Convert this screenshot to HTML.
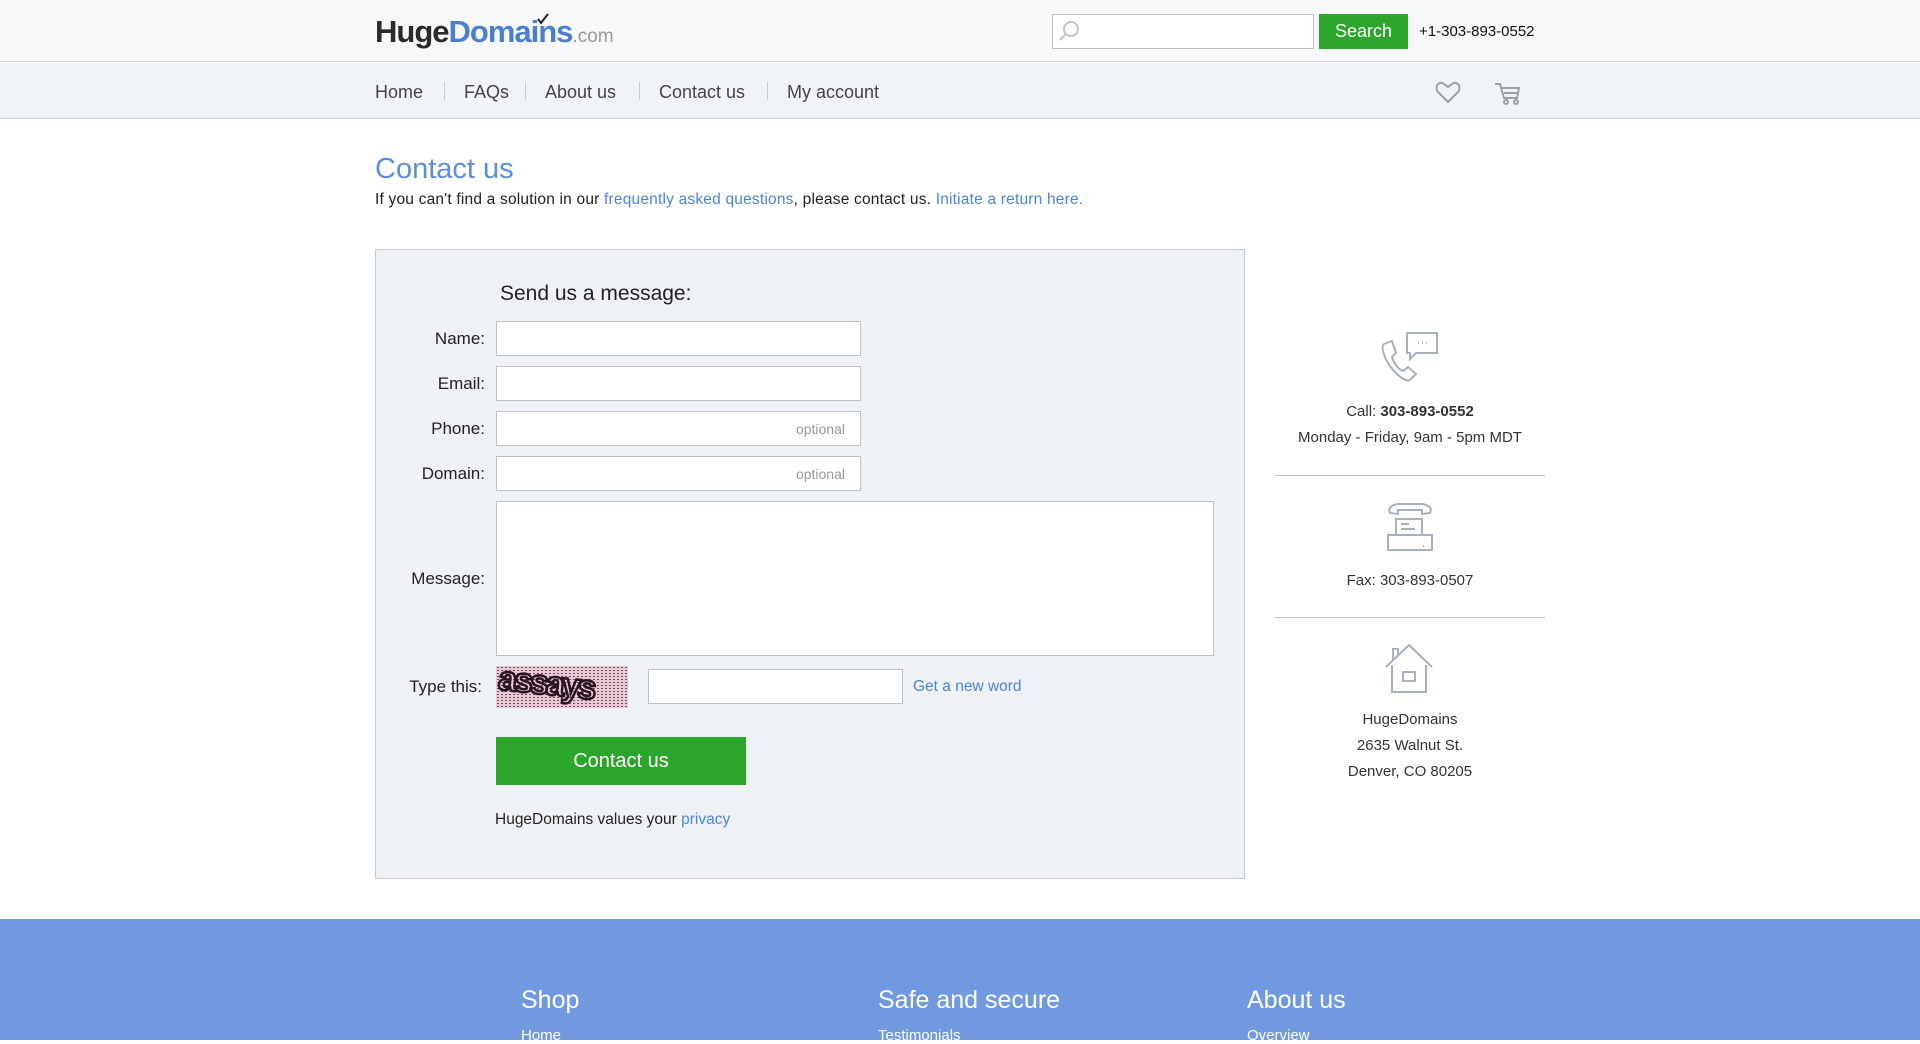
<!DOCTYPE html>
<html><head><meta charset="utf-8"><style>
*{margin:0;padding:0;box-sizing:border-box}
body{width:1920px;height:1040px;overflow:hidden;font-family:"Liberation Sans","DejaVu Sans",sans-serif;background:#fff;color:#222;position:relative}
.a{position:absolute}
.top{left:0;top:0;width:1920px;height:62px;background:#f6f8fa;border-bottom:1px solid #d4d8dd}
.nav{left:0;top:63px;width:1920px;height:56px;background:#f0f4f7;border-bottom:1px solid #cfd4d9}
.navi{top:80px;font-size:18px;color:#444;height:22px;line-height:22px}
.sep{top:82px;width:1px;height:18px;background:#c8ccd0}
.lbl{font-size:17px;color:#222;text-align:right;width:130px;left:355px}
.inp{left:496px;width:365px;height:35px;background:#fff;border:1px solid #bfc3c7}
.opt{font-size:14px;color:#999;position:absolute;right:15px;top:9px}
.link{color:#4a86d8}
.rc{width:270px;left:1275px;text-align:center;font-size:15px;color:#333}
.hr{left:1275px;width:270px;height:1px;background:#b9c3cc}
.fh{top:986px;font-size:25px;color:#fff}
.fl{top:1027px;font-size:15px;color:#fff}
</style></head><body>
<div class="a top"></div>
<div class="a" style="left:375px;top:14px;font-size:31px;font-weight:bold;letter-spacing:-1px;line-height:36px"><span style="color:#2a2a2a">Huge</span><span style="color:#4a7fcf">Domains</span><span style="color:#999;font-size:19px;font-weight:normal;letter-spacing:0">.com</span></div>
<svg class="a" style="left:536px;top:13px" width="14" height="12"><path d="M2 6l3 4 7-9" stroke="#222" stroke-width="2" fill="none"/></svg>
<div class="a" style="left:1052px;top:14px;width:262px;height:35px;background:#fff;border:1px solid #c0c0c0"></div>
<svg class="a" style="left:1057px;top:19px" width="24" height="24"><circle cx="14" cy="10" r="7" stroke="#c6c6c6" stroke-width="2" fill="none"/><path d="M9 15l-6 6" stroke="#c6c6c6" stroke-width="2"/></svg>
<div class="a" style="left:1319px;top:14px;width:89px;height:35px;background:#2ba52b;color:#fff;font-size:18px;text-align:center;line-height:35px">Search</div>
<div class="a" style="left:1419px;top:23px;font-size:15px;color:#111">+1-303-893-0552</div>
<div class="a nav"></div>
<div class="a navi" style="left:375px;top:81px">Home</div><div class="a sep" style="left:444px"></div>
<div class="a navi" style="left:464px;top:81px">FAQs</div><div class="a sep" style="left:525px"></div>
<div class="a navi" style="left:545px;top:81px">About us</div><div class="a sep" style="left:639px"></div>
<div class="a navi" style="left:659px;top:81px">Contact us</div><div class="a sep" style="left:767px"></div>
<div class="a navi" style="left:787px;top:81px">My account</div>
<svg class="a" style="left:1435px;top:81px" width="26" height="24"><path d="M13 21L3 11C-1 6 4-1 9 3l4 3 4-3c5-4 10 3 6 8z" stroke="#9aa0a6" stroke-width="2" fill="none"/></svg>
<svg class="a" style="left:1494px;top:81px" width="28" height="26"><path d="M1 3h5l4 14h13l2-10H8" stroke="#9aa0a6" stroke-width="2" fill="none"/><path d="M10 12h14" stroke="#9aa0a6" stroke-width="2"/><circle cx="12" cy="21" r="2" stroke="#9aa0a6" stroke-width="2" fill="none"/><circle cx="22" cy="21" r="2" stroke="#9aa0a6" stroke-width="2" fill="none"/></svg>

<div class="a" style="left:375px;top:153px;font-size:29px;color:#5b8fd9">Contact us</div>
<div class="a" style="left:375px;top:191px;font-size:15.5px;color:#222;letter-spacing:0.2px">If you can't find a solution in our <span class="link">frequently asked questions</span>, please contact us. <span class="link">Initiate a return here.</span></div>

<div class="a" style="left:375px;top:249px;width:870px;height:630px;background:#eff2f5;border:1px solid #c8ccd0"></div>
<div class="a" style="left:500px;top:282px;font-size:21px;color:#222">Send us a message:</div>
<div class="a lbl" style="top:329px">Name:</div><div class="a inp" style="top:321px"></div>
<div class="a lbl" style="top:374px">Email:</div><div class="a inp" style="top:366px"></div>
<div class="a lbl" style="top:419px">Phone:</div><div class="a inp" style="top:411px"><span class="opt">optional</span></div>
<div class="a lbl" style="top:464px">Domain:</div><div class="a inp" style="top:456px"><span class="opt">optional</span></div>
<div class="a lbl" style="top:569px">Message:</div>
<div class="a" style="left:496px;top:501px;width:718px;height:155px;background:#fff;border:1px solid #bfc3c7"></div>
<div class="a" style="left:355px;top:677px;width:127px;text-align:right;font-size:17px">Type this:</div>
<div class="a" style="left:496px;top:666px;width:132px;height:42px;background:#e9c9d3;background-image:radial-gradient(#6a4a5a 0.8px,transparent 1px);background-size:4px 3px;overflow:hidden"><svg width="132" height="42"><text x="2" y="30" font-family="Liberation Sans,sans-serif" font-size="34" font-weight="bold" fill="none" stroke="#2a1424" stroke-width="2.5" letter-spacing="-3" transform="rotate(6 66 21)">assays</text></svg></div>
<div class="a" style="left:648px;top:669px;width:255px;height:35px;background:#fff;border:1px solid #bfc3c7"></div>
<div class="a link" style="left:913px;top:678px;font-size:15.5px">Get a new word</div>
<div class="a" style="left:496px;top:737px;width:250px;height:48px;background:#2ba52b;color:#fff;font-size:20px;text-align:center;line-height:48px">Contact us</div>
<div class="a" style="left:495px;top:811px;font-size:15.5px">HugeDomains values your <span class="link">privacy</span></div>

<svg class="a" style="left:1378px;top:331px" width="64" height="54" fill="none" stroke="#a8b2bc" stroke-width="2"><path d="M14 10l-8 3c-3 2-1 12 6 22s16 16 20 14l6-6-8-7-5 4c-4-1-10-9-11-14l4-4z"/><path d="M29 2h30v20H38l-6 6v-6h-3z"/><path d="M40 12h1M44 12h1M48 12h1"/></svg>
<div class="a rc" style="top:403px">Call: <b>303-893-0552</b></div>
<div class="a rc" style="top:429px">Monday - Friday, 9am - 5pm MDT</div>
<div class="a hr" style="top:475px"></div>
<svg class="a" style="left:1384px;top:501px" width="52" height="54" fill="none" stroke="#a8b2bc" stroke-width="2"><path d="M6 12c-2-4 0-8 8-9h24c8 1 10 5 8 9l-8 1v-4H14v4z"/><path d="M12 18h26v16H12z"/><path d="M17 23h8M17 28h14"/><path d="M12 34H4v15h44V34h-10"/><path d="M39 45h1"/></svg>
<div class="a rc" style="top:572px">Fax: 303-893-0507</div>
<div class="a hr" style="top:617px"></div>
<svg class="a" style="left:1384px;top:643px" width="52" height="52" fill="none" stroke="#a8b2bc" stroke-width="2"><path d="M2 24L25 2l23 22"/><path d="M9 17v-11h5v6"/><path d="M8 22v27h34V22"/><path d="M19 29h12v9H19z"/></svg>
<div class="a rc" style="top:711px">HugeDomains</div>
<div class="a rc" style="top:737px">2635 Walnut St.</div>
<div class="a rc" style="top:763px">Denver, CO 80205</div>

<div class="a" style="left:0;top:919px;width:1920px;height:121px;background:#7199e0"></div>
<div class="a fh" style="left:521px">Shop</div>
<div class="a fh" style="left:878px">Safe and secure</div>
<div class="a fh" style="left:1247px">About us</div>
<div class="a fl" style="left:521px">Home</div>
<div class="a fl" style="left:878px">Testimonials</div>
<div class="a fl" style="left:1247px">Overview</div>
</body></html>
